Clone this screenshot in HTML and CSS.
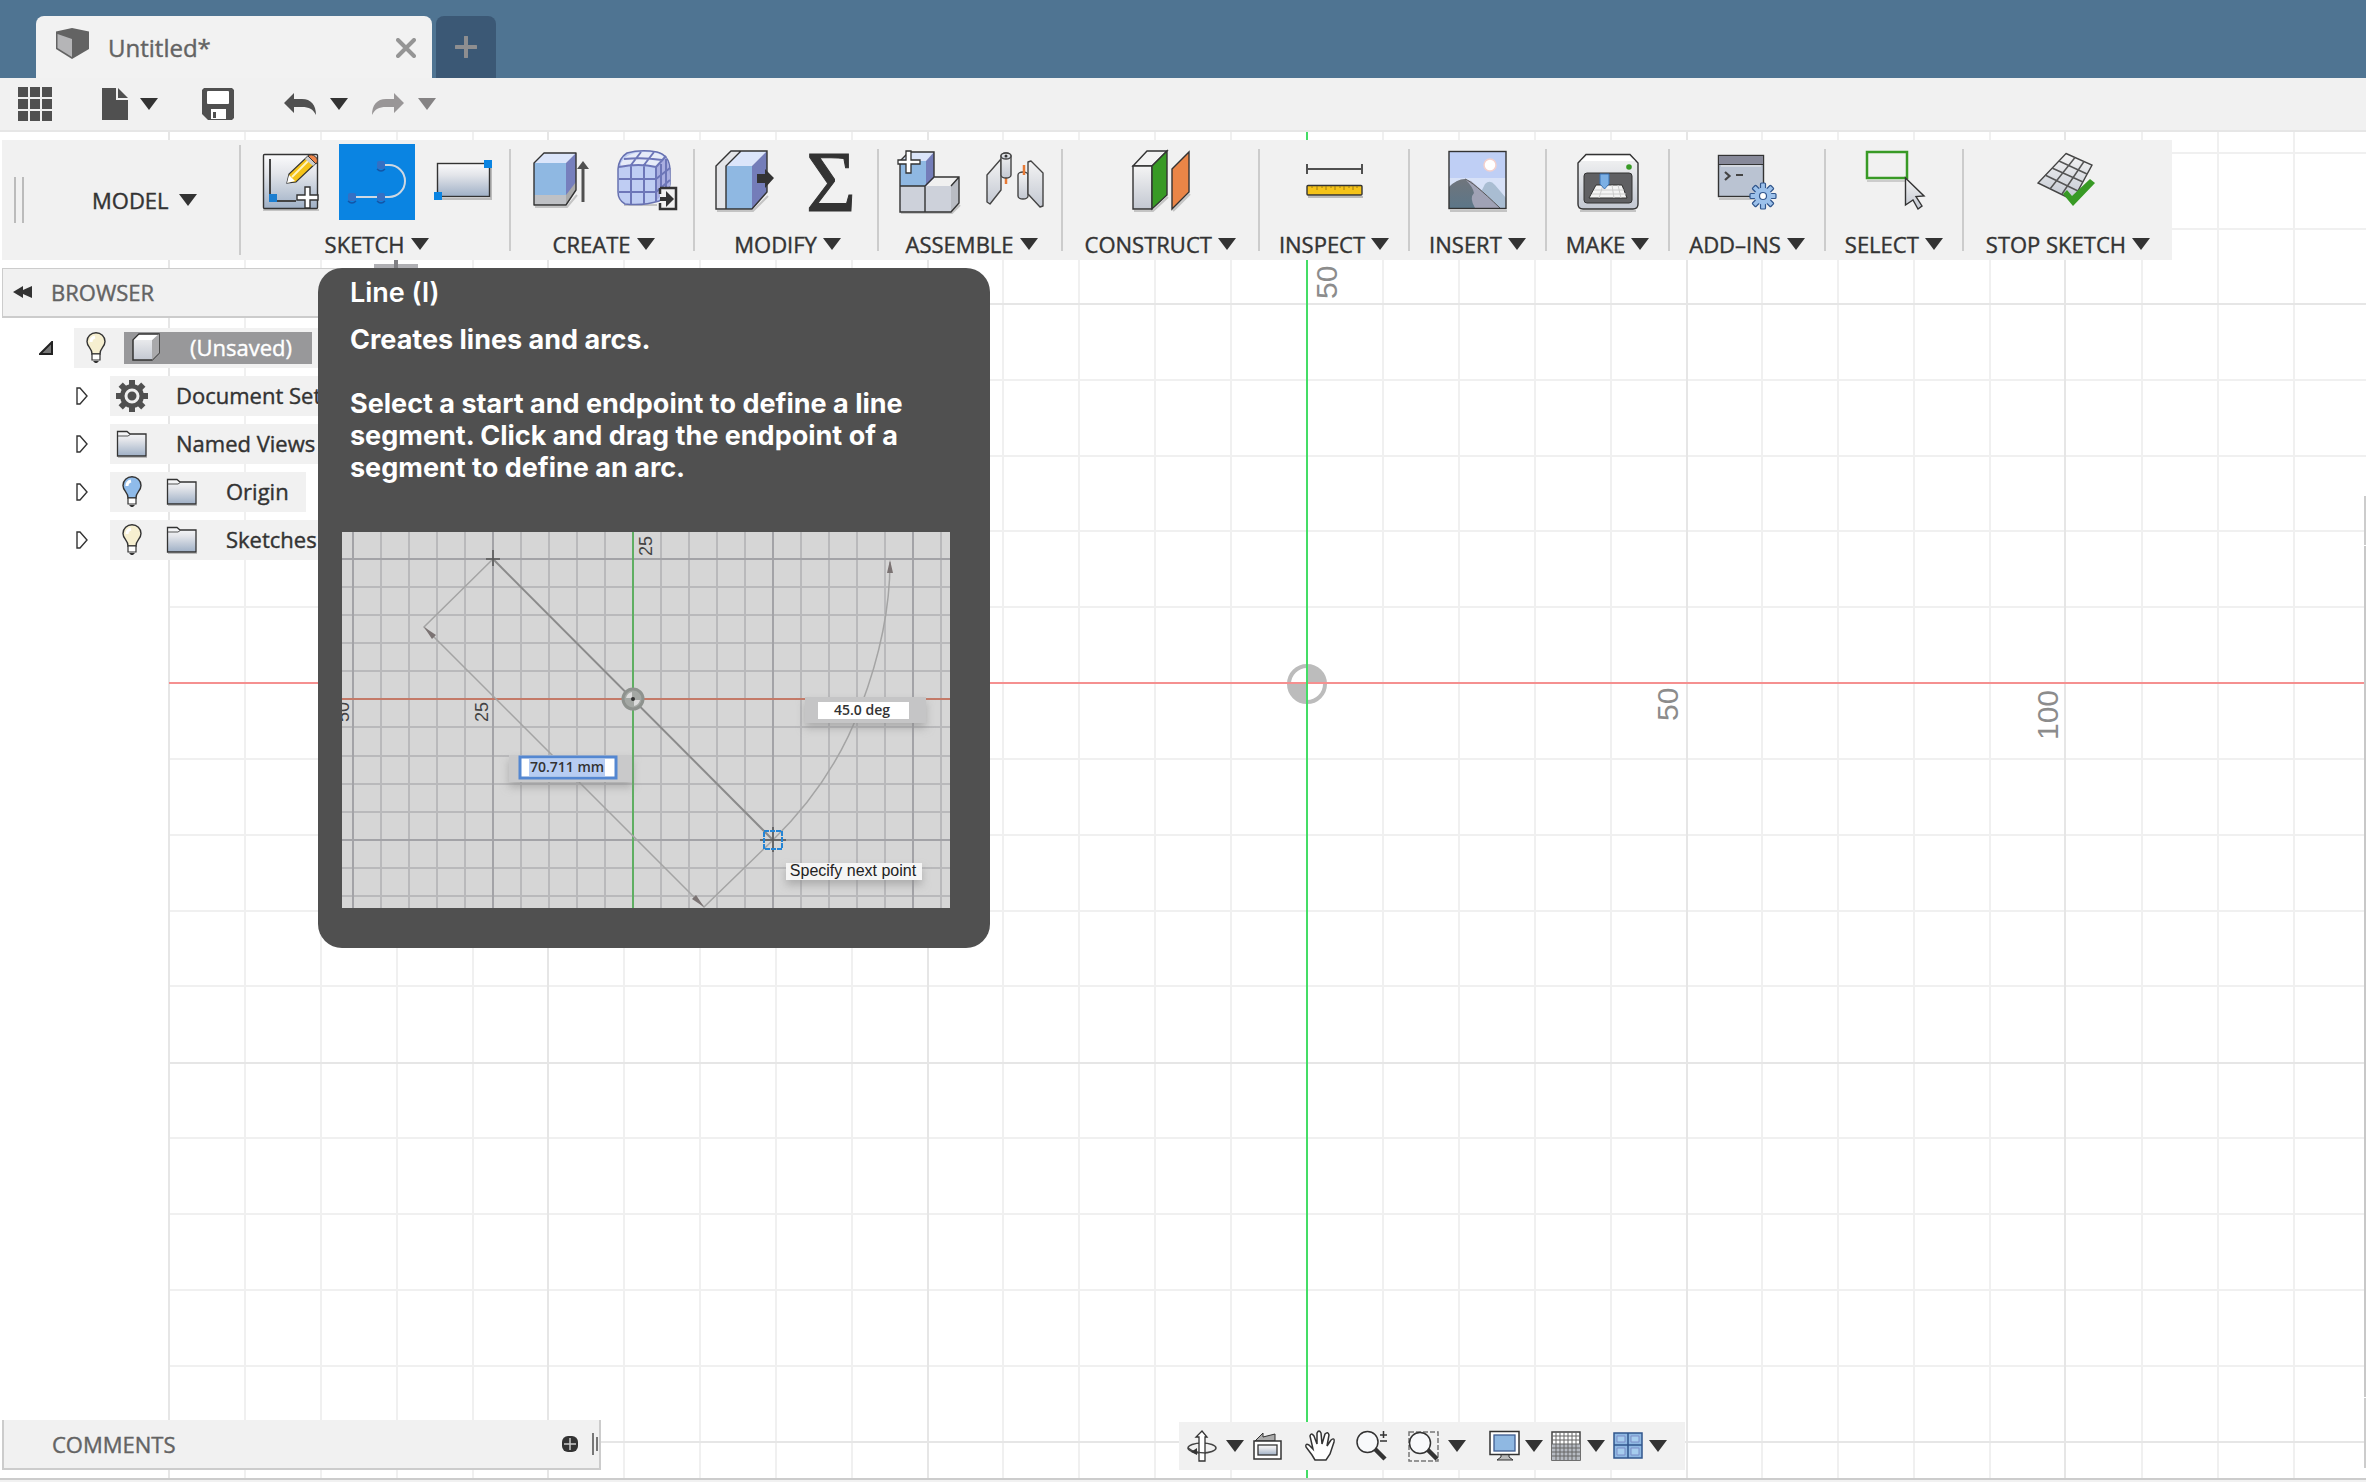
FILE: index.html
```html
<!DOCTYPE html>
<html lang="en">
<head>
<meta charset="utf-8">
<title>Untitled*</title>
<link rel="stylesheet" href="styles.css">
</head>
<body>
<svg class="defs" width="0" height="0" aria-hidden="true">
  <defs>
    <linearGradient id="steel" x1="0" y1="0" x2="0" y2="1"><stop offset="0" stop-color="#fbfbfc"/><stop offset=".35" stop-color="#e3e5ea"/><stop offset="1" stop-color="#9fb0c6"/></linearGradient>
    <linearGradient id="silver" x1="0" y1="0" x2="0" y2="1"><stop offset="0" stop-color="#f4f4f4"/><stop offset="1" stop-color="#c3c8d2"/></linearGradient>
    <linearGradient id="peak" x1="0" y1="0" x2="0" y2="1"><stop offset="0" stop-color="#70757c"/><stop offset="1" stop-color="#5c7688"/></linearGradient>
    <symbol id="caret" viewBox="0 0 18 12"><path d="M0 0H18L9 12Z" fill="currentColor"/></symbol>
    <symbol id="expand" viewBox="0 0 12 18"><path d="M1 1H4L11 9L4 17H1Z" fill="#fff" stroke="#333" stroke-width="1.4"/></symbol>
    <symbol id="folder" viewBox="0 0 32 28"><path d="M1.500 26V1.500H11L14 4H30V26Z" fill="url(#steel)" stroke="#333" stroke-width="1.300"/><path d="M2 6H12L15 4" fill="none" stroke="#555"/><path d="M2 27.500H31" stroke="#bbb"/></symbol>
    <symbol id="bulb" viewBox="0 0 20 32"><path d="M6 22C6 16 1 15 1 9.500A9 8.700 0 0 1 19 9.500C19 15 14 16 14 22Z" fill="currentColor" stroke="#333" stroke-width="1.400"/><path d="M6 22H14V28H6Z" fill="#fff" stroke="#333" stroke-width="1.200"/><path d="M7 29H13L11 31H9Z" fill="#333"/><path d="M5 10A5 5 0 0 1 9 5" stroke="#fff" stroke-width="3" fill="none"/></symbol>
    <symbol id="gear" viewBox="-16 -16 32 32"><g fill="currentColor"><rect x="-3" y="-16" width="6" height="32"/><rect x="-3" y="-16" width="6" height="32" transform="rotate(45)"/><rect x="-3" y="-16" width="6" height="32" transform="rotate(90)"/><rect x="-3" y="-16" width="6" height="32" transform="rotate(135)"/><circle r="12"/></g><circle r="6" fill="none" stroke="#f1f1f1" stroke-width="3"/></symbol>
  </defs>
</svg>

<header class="titlebar">
  <div class="tab">
    <svg width="34" height="32" viewBox="0 0 34 32"><path d="M0 3.500L16 0L33 3.500V21L16 31L0 21Z" fill="#636363"/><path d="M1.500 6L16 11V29L1.500 20Z" fill="#b5b5b7"/></svg>
    <span class="tab-name">Untitled*</span>
    <button class="tab-close" aria-label="Close tab"><svg width="20" height="20" viewBox="0 0 20 20"><path d="M2 2L18 18M18 2L2 18" stroke="#959595" stroke-width="4" stroke-linecap="round"/></svg></button>
  </div>
  <button class="tab-new" aria-label="New tab"><svg width="22" height="22" viewBox="0 0 22 22"><path d="M11 1V21M1 11H21" stroke="#8e8e90" stroke-width="4" stroke-linecap="round"/></svg></button>
</header>

<nav class="quickbar" aria-label="File">
  <button class="qb-grid" aria-label="Data panel"><svg width="34" height="34" viewBox="0 0 34 34"><path d="M0 0h10v10H0zM12 0h10v10H12zM24 0h10v10H24zM0 12h10v10H0zM12 12h10v10H12zM24 12h10v10H24zM0 24h10v10H0zM12 24h10v10H12zM24 24h10v10H24z" fill="#505050"/></svg></button>
  <button class="qb-item" aria-label="File"><svg width="26" height="32" viewBox="0 0 26 32"><path d="M0 0H14V12H26V32H0Z" fill="#505050"/><path d="M16 0L26 10H16Z" fill="#505050"/></svg><svg class="caret"><use href="#caret"/></svg></button>
  <button class="qb-item" aria-label="Save"><svg width="32" height="32" viewBox="0 0 32 32"><path d="M2 0H30L32 2V30L30 32H6L0 26V2Z" fill="#505050"/><rect x="5" y="3" width="22" height="13" rx="1" fill="#fff"/><rect x="9" y="21" width="15" height="10" fill="#fff"/><rect x="11" y="24" width="3" height="6" fill="#505050"/></svg></button>
  <button class="qb-item" aria-label="Undo"><svg width="32" height="22" viewBox="0 0 32 22"><path d="M0 10L10 0V6H18C27 6 32 12 32 22C29 16 25 14 18 14H10V20Z" fill="#505050"/></svg><svg class="caret"><use href="#caret"/></svg></button>
  <button class="qb-item muted" aria-label="Redo"><svg width="32" height="22" viewBox="0 0 32 22"><path d="M32 10L22 0V6H14C5 6 0 12 0 22C3 16 7 14 14 14H22V20Z" fill="#999697"/></svg><svg class="caret"><use href="#caret"/></svg></button>
</nav>

<main class="workspace">
  <svg class="canvas" aria-label="Sketch grid">
    <g transform="translate(0 -132)">
      <path class="minor" d="M245 0V4000M321 0V4000M397 0V4000M473 0V4000M624 0V4000M700 0V4000M776 0V4000M852 0V4000M1003 0V4000M1079 0V4000M1155 0V4000M1231 0V4000M1383 0V4000M1459 0V4000M1535 0V4000M1611 0V4000M1762 0V4000M1838 0V4000M1914 0V4000M1990 0V4000M2142 0V4000M2218 0V4000M2294 0V4000M169 153H5000M169 229H5000M169 380H5000M169 456H5000M169 531H5000M169 607H5000M169 759H5000M169 835H5000M169 911H5000M169 986H5000M169 1138H5000M169 1214H5000M169 1290H5000M169 1366H5000"/>
      <path class="major" d="M169 0V4000M548 0V4000M928 0V4000M1687 0V4000M2065 0V4000M169 304H5000M169 1063H5000M169 1442H5000"/>
      <circle cx="1307" cy="684" r="18" fill="#fff" stroke="#bcbcbc" stroke-width="4"/>
      <path d="M1307 684V665A19 19 0 0 1 1326 684ZM1307 684V703A19 19 0 0 1 1288 684Z" fill="#bcbcbc"/>
      <path d="M169 683H5000" stroke="#f59090" stroke-width="2"/>
      <path d="M1307 0V4000" stroke="#44dd66" stroke-width="2"/>
      <path d="M374 266H418" stroke="#b0b0b4" stroke-width="4"/><path d="M396 258V268" stroke="#808084" stroke-width="4"/>
      <g class="ruler">
        <text transform="translate(1337 299) rotate(-90)">50</text>
        <text transform="translate(1678 721) rotate(-90)">50</text>
        <text transform="translate(2058 740) rotate(-90)">100</text>
      </g>
    </g>
  </svg>

  <div class="ribbon">
    <div class="grip"></div>
    <button class="label model">MODEL <svg class="caret"><use href="#caret"/></svg></button>
    <span class="sep tall"></span>

    <section class="group">
      <div class="tools">
        <button class="tool" aria-label="Create sketch"><svg viewBox="0 0 76 76"><path d="M10 66H66" stroke="#c4c4c4" stroke-width="2"/><rect x="10.500" y="10.500" width="54" height="54" rx="1" fill="url(#steel)" stroke="#333" stroke-width="1.400"/><path d="M17 15V57H43" stroke="#444" stroke-width="2" fill="none"/><rect x="16" y="50" width="8" height="8" fill="#1b7ed0"/><path d="M34 39L36 30L55 12L63 19L43 38Z" fill="#f5c318" stroke="#333" stroke-width="1.200"/><path d="M34 39L36 31L42 37Z" fill="#fff"/><path d="M39 33L57 15" stroke="#fff5bd" stroke-width="2"/><path d="M52 15L55 12L63 19L60 22Z" fill="#ccc"/><path d="M55 12C59 8 68 15 63 20Z" fill="#ee8549" stroke="#333"/><path d="M52 43H57V51H65V56H57V64H52V56H44V51H52Z" fill="#fff" stroke="#333" stroke-width="1.400"/></svg></button>
        <button class="tool active" aria-label="Line"><svg viewBox="0 0 76 76"><path d="M13 53H50A16 16 0 0 0 50 21H42" fill="none" stroke="#cfd8e2" stroke-width="2"/><g fill="#3470c4"><rect x="9" y="49" width="8" height="8" rx="2"/><rect x="38" y="49" width="8" height="8" rx="2"/><rect x="38" y="17" width="8" height="8" rx="2"/></g><path d="M9 57q4 4 8 0M38 57q4 4 8 0M38 25q4 4 8 0" stroke="#1256a8" stroke-width="1.500" fill="none"/></svg></button>
        <button class="tool" aria-label="Rectangle"><svg viewBox="0 0 76 76"><path d="M14 55H66V24" stroke="#bbb" stroke-width="2" fill="none"/><rect x="12.500" y="19.500" width="52" height="33" fill="url(#steel)" stroke="#333" stroke-width="1.400"/><path d="M59 16h8v8h-8zM9 48h8v8H9z" fill="#0a84e2"/></svg></button>
      </div>
      <button class="label">SKETCH <svg class="caret"><use href="#caret"/></svg></button>
    </section>
    <span class="sep"></span>

    <section class="group">
      <div class="tools">
        <button class="tool" aria-label="Extrude"><svg viewBox="0 0 76 76"><path d="M12 63H44L54 51" stroke="#c4c4c4" stroke-width="2" fill="none"/><g stroke-linejoin="round"><path d="M11 19L21 9H53L43 19Z" fill="#dbe5fa"/><path d="M43 19L53 9V46L43 61Z" fill="#767fbd"/><path d="M43 51L53 38V46L43 61Z" fill="#aaa"/><path d="M11 19H43V51H11Z" fill="#8fb8e2"/><path d="M11 51H43V61H11Z" fill="#bfc1c5"/><path d="M11 19L21 9H53V46L43 61H11Z" fill="none" stroke="#333" stroke-width="1.400"/></g><path d="M60 58V22" stroke="#505050" stroke-width="3"/><path d="M54 25L60 17L66 25Z" fill="#505050"/></svg></button>
        <button class="tool" aria-label="Create form"><svg viewBox="0 0 76 76"><path d="M15 61H48" stroke="#c4c4c4" stroke-width="2"/><path d="M9 48V25Q10 14 18 9Q32 5 48 8Q60 11 61 25V40Q60 52 50 57Q34 62 16 60Q9 56 9 48Z" fill="#bfcdf3" stroke="#6771b0" stroke-width="1.500"/><path d="M12 19Q18 8 36 8Q53 8 56 15L47 23Q30 20 12 23Z" fill="#e6ebf8"/><path d="M47 23L57 13Q62 24 61 42L47 57Z" fill="#a9aee0"/><path d="M10 23Q30 19 47 23V58M47 23L57 12M10 35H47L61 24M10 48H47L61 36M22 21V60M35 21V60M22 21L32 8M35 21L45 8M15 15Q34 13 53 16M52 20V54M57 15V50" fill="none" stroke="#6d76b8" stroke-width="2"/><path d="M51 44H67V65H51V59M51 50V44" fill="#f1f1f1" stroke="#333" stroke-width="2.500"/><path d="M51 53H57V47L65 55L57 63V57H51Z" fill="#333"/></svg></button>
      </div>
      <button class="label">CREATE <svg class="caret"><use href="#caret"/></svg></button>
    </section>
    <span class="sep"></span>

    <section class="group">
      <div class="tools">
        <button class="tool" aria-label="Press pull"><svg viewBox="0 0 76 76"><path d="M10 67H46L61 52" stroke="#c4c4c4" stroke-width="2" fill="none"/><path d="M9 22L24 7H34L19 22V65H9Z" fill="#e4e5e8"/><path d="M19 22L34 7H60L45 22Z" fill="#dbe5fa"/><path d="M45 22L60 7V48L45 65Z" fill="#747db9"/><path d="M19 22H45V65H19Z" fill="#8fb8e2"/><path d="M9 22L24 7H60V48L45 65H9ZM19 65V22L34 7" fill="none" stroke="#333" stroke-width="1.400"/><path d="M50 30H58V25L67 34L58 44V39H50Z" fill="#333"/></svg></button>
        <button class="tool" aria-label="Parameters"><svg viewBox="0 0 76 76"><text x="38" y="67" text-anchor="middle" class="sigma">Σ</text></svg></button>
      </div>
      <button class="label">MODIFY <svg class="caret"><use href="#caret"/></svg></button>
    </section>
    <span class="sep"></span>

    <section class="group">
      <div class="tools">
        <button class="tool" aria-label="New component"><svg viewBox="0 0 76 76"><path d="M10 69H61L69 61" stroke="#c4c4c4" stroke-width="2" fill="none"/><path d="M34 42L43 33H68L60 42Z" fill="#f0f0f0"/><path d="M60 42L68 33V59L60 68Z" fill="#b9bcc3"/><path d="M9 42H60V68H9Z" fill="#cdd1da"/><path d="M9 17L18 8H43L35 17Z" fill="#dbe5fa"/><path d="M35 17L43 8V34L35 42Z" fill="#747db9"/><path d="M9 17H35V42H9Z" fill="#8fb8e2"/><path d="M9 42V17L18 8H43V33H68V59L60 68H9V42H34V68M34 42L43 33M60 42L68 33" fill="none" stroke="#333" stroke-width="1.400"/><path d="M15 7H20V16H29V20H20V29H15V20H7V16H15Z" fill="#fff" stroke="#333" stroke-width="1.300"/></svg></button>
        <button class="tool" aria-label="Joint"><svg viewBox="0 0 76 76"><path d="M29 28V40" stroke="#e87a35" stroke-width="2.500"/><g fill="url(#silver)" stroke="#444" stroke-width="1.400" stroke-linejoin="round"><path d="M10 31L24 15V46L13 60L10 58Z"/><path d="M24 12A5 3 0 0 1 34 12V31A5 3 0 0 1 24 31Z"/><ellipse cx="29" cy="12" rx="5" ry="3"/><path d="M41 31A5 3 0 0 1 51 31V52A5 3 0 0 1 41 52Z"/><path d="M51 18L54 17L66 29V62L63 63L51 50Z"/></g><circle cx="29" cy="12" r="1.500" fill="#333"/><path d="M47 21V31" stroke="#e87a35" stroke-width="2.500"/></svg></button>
      </div>
      <button class="label">ASSEMBLE <svg class="caret"><use href="#caret"/></svg></button>
    </section>
    <span class="sep"></span>

    <section class="group single roomy">
      <div class="tools">
        <button class="tool" aria-label="Offset plane"><svg viewBox="0 0 76 76"><path d="M12 67H31L46 53M51 67L68 50" stroke="#c4c4c4" stroke-width="2" fill="none"/><g stroke="#333" stroke-width="1.400"><path d="M11 22L25 7H45L30 22Z" fill="#f3f3f3"/><path d="M11 22H30V65H11Z" fill="url(#silver)"/><path d="M30 22L45 7V51L30 65Z" fill="#389a25"/><path d="M50 25L67 8V48L50 65Z" fill="#ea8547"/></g></svg></button>
      </div>
      <button class="label">CONSTRUCT <svg class="caret"><use href="#caret"/></svg></button>
    </section>
    <span class="sep"></span>

    <section class="group single">
      <div class="tools">
        <button class="tool" aria-label="Measure"><svg viewBox="0 0 76 76"><path d="M11 25H66M11 20V30M66 20V30" stroke="#505050" stroke-width="2"/><path d="M12 53H67" stroke="#bbb" stroke-width="2"/><rect x="11" y="41.500" width="55" height="9.500" rx="1" fill="#f5c318" stroke="#333" stroke-width="1.400"/><path d="M16 42v2M21 42v4M26 42v2M30 42v4M35 42v2M39 42v4M44 42v2M48 42v4M53 42v2M57 42v4M61 42v2" stroke="#a07c14"/></svg></button>
      </div>
      <button class="label">INSPECT <svg class="caret"><use href="#caret"/></svg></button>
    </section>
    <span class="sep"></span>

    <section class="group single">
      <div class="tools">
        <button class="tool" aria-label="Insert image"><svg viewBox="0 0 76 76"><path d="M11 67H68" stroke="#c4c4c4" stroke-width="2"/><rect x="10" y="7.500" width="57" height="57" fill="#bfcff5"/><path d="M10 34H67V64H10Z" fill="#d7e1f7"/><circle cx="51" cy="21" r="6" fill="#fff" stroke="#f3d0cc" stroke-width="1.500"/><path d="M40 52L46 40Q51 35 56 41L67 54V64H40Z" fill="#a9bdd2"/><path d="M10 43Q22 32 32 37C41 44 53 57 61 64H10Z" fill="#a0a2b5"/><path d="M10 43Q18 35 26 35Q34 43 35 49Q30 54 36 64H10Z" fill="url(#peak)"/><path d="M26 35Q34 38 61 64" fill="none" stroke="#555"/><rect x="10" y="7.500" width="57" height="57" fill="none" stroke="#333" stroke-width="1.400"/></svg></button>
      </div>
      <button class="label">INSERT <svg class="caret"><use href="#caret"/></svg></button>
    </section>
    <span class="sep"></span>

    <section class="group single">
      <div class="tools">
        <button class="tool" aria-label="3D print"><svg viewBox="0 0 76 76"><path d="M10 67H66" stroke="#c4c4c4" stroke-width="2"/><path d="M8 19L16 10.500H60L68 19V60Q68 65 63 65H13Q8 65 8 60Z" fill="url(#silver)" stroke="#333" stroke-width="1.400"/><path d="M11 17L17 12H59L65 17Z" fill="#fff"/><rect x="14" y="29" width="48" height="30" rx="3" fill="#606063" stroke="#333"/><path d="M26 41H52L57 54H19Z" fill="#f4f4f4" stroke="#333"/><path d="M24 46H54M22 50H56M33 41L29 54M42 41L44 54M48 41L51 54" stroke="#ccc"/><path d="M30 30H39V40L34.500 45L30 40Z" fill="#7bafe4" stroke="#3b72b3"/><circle cx="59" cy="23" r="2.800" fill="#389a25"/></svg></button>
      </div>
      <button class="label">MAKE <svg class="caret"><use href="#caret"/></svg></button>
    </section>
    <span class="sep"></span>

    <section class="group single">
      <div class="tools">
        <button class="tool" aria-label="Scripts and add-ins"><svg viewBox="0 0 76 76"><path d="M10 55H50" stroke="#c4c4c4" stroke-width="2"/><rect x="9.500" y="11.500" width="45" height="41" fill="#bac3d2" stroke="#333" stroke-width="1.400"/><path d="M10 12H54V20H10Z" fill="#878999"/><path d="M10 20.500H54" stroke="#333"/><path d="M12 22H52" stroke="#eee"/><path d="M16 28L20.500 32L16 36" fill="none" stroke="#444" stroke-width="2.200"/><path d="M27 31H34" stroke="#444" stroke-width="2"/><g transform="translate(54 52)" stroke="#31568c" stroke-width="1.200"><g fill="#9cc1eb"><rect x="-2.500" y="-13" width="5" height="26" rx="1"/><rect x="-2.500" y="-13" width="5" height="26" rx="1" transform="rotate(45)"/><rect x="-2.500" y="-13" width="5" height="26" rx="1" transform="rotate(90)"/><rect x="-2.500" y="-13" width="5" height="26" rx="1" transform="rotate(135)"/></g><circle r="8" fill="#9cc1eb" stroke="#9cc1eb"/><circle r="3.500" fill="#fff"/></g></svg></button>
      </div>
      <button class="label">ADD–INS <svg class="caret"><use href="#caret"/></svg></button>
    </section>
    <span class="sep"></span>

    <section class="group single">
      <div class="tools">
        <button class="tool" aria-label="Select"><svg viewBox="0 0 76 76"><path d="M11 37H51" stroke="#ccc" stroke-width="2"/><rect x="11" y="8" width="40" height="26" fill="none" stroke="#389a25" stroke-width="2.500"/><path d="M49.500 34L68 52L60 52.500L66 62L62 65L57 56L49.500 61Z" fill="url(#silver)" stroke="#333" stroke-width="1.400"/></svg></button>
      </div>
      <button class="label">SELECT <svg class="caret"><use href="#caret"/></svg></button>
    </section>
    <span class="sep"></span>

    <section class="group single roomy">
      <div class="tools">
        <button class="tool" aria-label="Stop sketch"><svg viewBox="0 0 76 76"><path d="M36 9.500L62 21L43 56L8 39Z" fill="url(#silver)" stroke="#444" stroke-width="1.400"/><path d="M45 13.500L20 45M54 17.500L32 50M29 17L57 30M22 24L53 38M15 31L48 47" stroke="#555" stroke-width="1.500"/><path d="M33 50L37 46L42 52L60 35L65 39L43 62Z" fill="#389a25"/></svg></button>
      </div>
      <button class="label">STOP SKETCH <svg class="caret"><use href="#caret"/></svg></button>
    </section>
  </div>

  <aside class="browser">
    <h2 class="browser-head"><svg width="20" height="12" viewBox="0 0 20 12"><path d="M0 6L10 0V4L19 0V12L10 8V12Z" fill="#333"/></svg>BROWSER</h2>
    <ul class="tree">
      <li class="node root"><svg class="twist open" viewBox="0 0 14 14"><path d="M1 13L13 1V13Z" fill="#777" stroke="#222" stroke-width="2"/></svg>
        <div class="row"><svg class="bulb lit"><use href="#bulb"/></svg><span class="picked"><svg width="28" height="28" viewBox="0 0 28 28"><path d="M1 7L7 1H27V20L20 27H1Z" fill="url(#silver)" stroke="#333" stroke-width="1.500"/><path d="M20 7L27 1V20L20 27Z" fill="#a9a9ab"/><path d="M2 7L7 2H25L20 7Z" fill="#fff"/></svg>(Unsaved)</span></div></li>
      <li class="node"><svg class="twist"><use href="#expand"/></svg><div class="row wide"><svg class="cog"><use href="#gear"/></svg><span class="far">Document Settings</span></div></li>
      <li class="node"><svg class="twist"><use href="#expand"/></svg><div class="row wide"><svg class="folder"><use href="#folder"/></svg><span class="far">Named Views</span></div></li>
      <li class="node"><svg class="twist"><use href="#expand"/></svg><div class="row"><svg class="bulb off"><use href="#bulb"/></svg><svg class="folder"><use href="#folder"/></svg><span class="far">Origin</span></div></li>
      <li class="node"><svg class="twist"><use href="#expand"/></svg><div class="row"><svg class="bulb lit"><use href="#bulb"/></svg><svg class="folder"><use href="#folder"/></svg><span class="far">Sketches</span></div></li>
    </ul>
  </aside>

  <div class="tooltip" role="tooltip">
    <h3>Line (l)</h3>
    <p>Creates lines and arcs.</p>
    <p>Select a start and endpoint to define a line segment. Click and drag the endpoint of a segment to define an arc.</p>
    <svg class="preview" viewBox="0 0 608 376">
      <rect width="608" height="376" fill="#d6d6d6"/>
      <path d="M39 0V376M67 0V376M95 0V376M123 0V376M179 0V376M207 0V376M235 0V376M263 0V376M319 0V376M347 0V376M375 0V376M403 0V376M459 0V376M487 0V376M515 0V376M543 0V376M599 0V376M0 55H608M0 83H608M0 111H608M0 139H608M0 195H608M0 224H608M0 252H608M0 280H608M0 336H608M0 364H608" stroke="#b9b9bb" stroke-width="2"/>
      <path d="M11 0V376M151 0V376M431 0V376M571 0V376M0 27H608M0 308H608" stroke="#a3a3a7" stroke-width="2"/>
      <path d="M0 167H608" stroke="#c47a68" stroke-width="2"/><path d="M291 0V376" stroke="#5fae62" stroke-width="2"/>
      <path d="M151 27L431 308" stroke="#8b8b8b" stroke-width="2"/>
      <path d="M151 27L82 95L362 375L431 308C478 262 504 215 519 174C536 129 548 80 548 30" fill="none" stroke="#a4a4a4" stroke-width="1.500"/>
      <path d="M82 95L94 103L90 107ZM362 375L350 367L354 363ZM548 28L551 41H545Z" fill="#7b7373"/>
      <circle cx="291" cy="167" r="10" fill="#a4a8a4" stroke="#8e928e" stroke-width="3"/><path d="M284 166A8 8 0 0 1 290 160V166ZM298 168A8 8 0 0 1 292 174V168Z" fill="#dcdcdc"/><circle cx="291" cy="167" r="2" fill="#333"/>
      <path d="M151 18V34M144 27H158M431 295V320M418 308H444" stroke="#555" stroke-width="1.500"/>
      <rect x="422" y="299" width="18" height="18" fill="none" stroke="#2384d5" stroke-width="2" stroke-dasharray="5 1"/>
      <g class="preview-ruler"><text transform="translate(310 24) rotate(-90)">25</text><text transform="translate(146 190) rotate(-90)">25</text><text transform="translate(7 190) rotate(-90)">50</text></g>
      <g class="floating"><rect x="463" y="165" width="121" height="26" fill="#c5c5c6"/><rect x="167" y="223" width="123" height="27" fill="#c9c9ca"/><rect x="444" y="331" width="136" height="17" fill="#f5f5f5"/></g>
      <rect x="476" y="170" width="91" height="17" fill="#fff"/>
      <rect x="178" y="225" width="96" height="21" fill="#fff" stroke="#5487d1" stroke-width="3"/><rect x="187" y="227" width="76" height="17" fill="#b7cdf3"/>
      <text x="520" y="183" text-anchor="middle" class="value">45.0 deg</text>
      <text x="225" y="240" text-anchor="middle" class="value">70.711 mm</text>
      <text x="511" y="344" text-anchor="middle" class="hint">Specify next point</text>
    </svg>
  </div>

  <div class="side-dock"><span class="dock-top"></span><span class="dock-bar"></span><span class="dock-end"></span></div>

  <div class="bottom">
    <section class="comments"><h2>COMMENTS</h2>
      <button aria-label="Add comment"><svg width="16" height="16" viewBox="0 0 16 16"><rect width="16" height="16" rx="6" fill="#333"/><path d="M8 2V14M2 8H14" stroke="#ccc" stroke-width="1.500"/></svg></button>
      <svg width="6" height="22" viewBox="0 0 6 22"><path d="M1 0V22M5 4V18" stroke="#777" stroke-width="2"/></svg>
    </section>
    <nav class="navbar" aria-label="View">
      <div class="nav-set">
        <button aria-label="Orbit"><svg viewBox="0 0 32 32"><ellipse cx="16" cy="18" rx="14" ry="5" fill="none" stroke="#444" stroke-width="1.500"/><path d="M13 31V7H10L16 1L21 7H19V31Z" fill="#fff" stroke="#333" stroke-width="1.300"/><path d="M2 18Q8 23 20 23" fill="none" stroke="#444" stroke-width="1.500"/><path d="M5 22L11 18V25Z" fill="#333"/></svg></button><button class="drop" aria-label="Orbit menu"><svg class="caret"><use href="#caret"/></svg></button>
        <button aria-label="Look at"><svg viewBox="0 0 32 32"><path d="M3 11L11 3V7L23 4V11Z" fill="#aaa" stroke="#333"/><rect x="2" y="11" width="27" height="18" fill="#fff" stroke="#333" stroke-width="1.500"/><rect x="6" y="15" width="19" height="10" fill="url(#steel)" stroke="#333" stroke-width="1.300"/></svg></button>
        <button class="spaced" aria-label="Pan"><svg viewBox="0 0 32 32"><path d="M11 30L8 25L2 17Q1 13 5 15L9 19L6 6Q7 2 10 6L13 14L13 3Q15 -1 17 3L18 14L21 4Q24 1 25 5L23 16L27 10Q31 7 30 12L26 24L22 30Z" fill="#fff" stroke="#333" stroke-width="1.500"/></svg></button>
        <button class="spaced" aria-label="Zoom"><svg viewBox="0 0 32 32"><path d="M19 19L29 29" stroke="#333" stroke-width="4.500"/><circle cx="11.500" cy="12" r="10.500" fill="#f8f9fb" stroke="#333" stroke-width="1.500"/><path d="M24 5H31M27.500 1V8M24 11H31" stroke="#333" stroke-width="1.500"/></svg></button>
        <button class="spaced" aria-label="Zoom window"><svg viewBox="0 0 32 32"><rect x="1" y="2" width="29" height="29" fill="none" stroke="#777" stroke-dasharray="5 2" stroke-width="1.500"/><path d="M19 19L29 29" stroke="#333" stroke-width="4.500"/><circle cx="12" cy="13" r="10.500" fill="#f8f9fb" stroke="#333" stroke-width="1.500"/></svg></button><button class="drop" aria-label="Zoom menu"><svg class="caret"><use href="#caret"/></svg></button>
      </div>
      <div class="nav-set tight">
        <button aria-label="Display"><svg viewBox="0 0 32 32"><path d="M12 24H20V27L24 30H8L12 27Z" fill="#bbb" stroke="#333"/><rect x="1" y="1.500" width="29" height="23" fill="#fff" stroke="#333" stroke-width="1.500"/><rect x="5" y="5" width="21" height="16" fill="#8fb8e2" stroke="#3e5c90" stroke-width="1.300"/></svg></button><button class="drop" aria-label="Display menu"><svg class="caret"><use href="#caret"/></svg></button>
        <button aria-label="Grid"><svg viewBox="0 0 32 32"><rect x="1" y="2" width="28" height="28" fill="#fff" stroke="#444" stroke-width="1.500"/><path d="M1 14H29V30H1Z" fill="#b6bac1"/><path d="M5 2V30M9 2V30M13 2V30M17 2V30M21 2V30M25 2V30M1 6H29M1 10H29M1 14H29M1 18H29M1 22H29M1 26H29" stroke="#666"/></svg></button><button class="drop" aria-label="Grid menu"><svg class="caret"><use href="#caret"/></svg></button>
        <button aria-label="Viewports"><svg viewBox="0 0 32 32"><rect x="1" y="3" width="28" height="25" fill="#8fb8e2" stroke="#31568c" stroke-width="1.500"/><path d="M15 3V28M1 15H29" stroke="#31568c" stroke-width="1.500"/><path d="M4 6H12V12H4ZM18 6H26V12H18ZM4 18H12V25H4ZM18 18H26V25H18Z" fill="#a6cdee" stroke="#7c8fc8"/></svg></button><button class="drop" aria-label="Viewports menu"><svg class="caret"><use href="#caret"/></svg></button>
      </div>
    </nav>
  </div>
</main>
<footer class="status"></footer>
</body>
</html>
```

FILE: styles.css
```css
* { box-sizing: border-box; }

body {
  margin: 0;
  min-height: 100vh;
  display: flex;
  flex-direction: column;
  background: #fff;
  color: #333;
  font: 22px/30px "Open Sans", "Noto Sans", sans-serif;
}

button {
  display: flex;
  align-items: center;
  padding: 0;
  border: 0;
  background: none;
  color: inherit;
  font: inherit;
}

svg { display: block; flex: none; }
h2, h3, p, ul { margin: 0; padding: 0; font-size: inherit; font-weight: inherit; }
.defs { position: absolute; }
.caret { width: 18px; height: 12px; color: #333; }

/* Document tabs */
.titlebar {
  display: flex;
  gap: 4px;
  height: 78px;
  padding: 16px 36px 0;
  background: #4f7492;
}
.tab {
  display: flex;
  align-items: center;
  width: 396px;
  padding: 0 16px 6px 20px;
  border-radius: 8px 8px 0 0;
  background: #f2f2f2;
  color: #636363;
  font-size: 24px;
}
.tab-name { margin-left: 18px; padding-top: 8px; -webkit-text-stroke: 0.4px currentColor; }
.tab-close { margin: 8px 0 0 auto; }
.tab-new {
  justify-content: center;
  width: 60px;
  border-radius: 8px 8px 0 0;
  background: #3b5875;
}

/* File actions */
.quickbar {
  display: flex;
  align-items: center;
  height: 54px;
  padding: 0 18px;
  border-bottom: 2px solid #e6e6e6;
  background: #f1f1f1;
}
.qb-grid { margin-right: 50px; }
.qb-item { gap: 12px; margin-right: 44px; }
.qb-item:nth-of-type(3) { margin-right: 50px; }
.qb-item:nth-of-type(4) { gap: 14px; margin-right: 24px; }
.qb-item.muted { gap: 14px; }
.muted .caret { color: #858384; }

/* Modelling area */
.workspace {
  position: relative;
  flex: 1;
  display: flex;
  flex-direction: column;
  align-items: flex-start;
  padding: 8px 0 8px 2px;
}
.canvas {
  position: absolute;
  inset: 0;
  width: 100%;
  height: 100%;
  shape-rendering: crispEdges;
}
.canvas circle { shape-rendering: auto; }
.minor { stroke: #f0f0f0; stroke-width: 2; }
.major { stroke: #e6e6e6; stroke-width: 2; }
.ruler { fill: #8c8c8c; font: 30px "Liberation Sans", Arial, sans-serif; }

/* Ribbon */
.ribbon {
  position: relative;
  display: flex;
  height: 120px;
  background: #f1f1f1;
}
.grip {
  align-self: center;
  width: 10px;
  height: 46px;
  margin-left: 12px;
  border: solid #bbb;
  border-width: 0 2px;
}
.sep {
  align-self: center;
  width: 2px;
  height: 102px;
  background: #ccc;
}
.sep.tall { height: 110px; }
.label { gap: 6px; white-space: nowrap; -webkit-text-stroke: 0.4px currentColor; }
.model { gap: 10px; margin: 0 42px 0 68px; }
.group {
  display: flex;
  flex-direction: column;
  align-items: center;
  gap: 9px;
  padding: 4px 8px 0 12px;
}
.group.single { padding: 4px 19px 0; }
.group.roomy { padding: 4px 22px 0; }
.tools { display: flex; gap: 10px; }
.tool svg { width: 76px; height: 76px; overflow: visible; }
.tool.active { background: #0a84e2; }
.sigma { fill: #333; stroke: #333; stroke-width: 1px; font: 86px "Liberation Serif", "Times New Roman", serif; }

/* Browser tree */
.browser { position: relative; width: 480px; margin-top: 8px; }
.browser-head {
  display: flex;
  align-items: center;
  gap: 18px;
  height: 50px;
  padding: 0 10px 2px;
  border: 2px solid #ccc;
  border-width: 1px 1px 2px;
  background: #f1f1f1;
  color: #636363;
  -webkit-text-stroke: 0.4px currentColor;
}
.tree { display: flex; flex-direction: column; gap: 8px; padding: 10px 0 0 74px; list-style: none; -webkit-text-stroke: 0.4px currentColor; }
.node { display: flex; align-items: center; gap: 22px; height: 40px; }
.node.root { gap: 21px; margin-left: -37px; }
.twist { width: 12px; height: 18px; }
.twist.open { width: 14px; height: 14px; }
.row {
  display: flex;
  align-items: center;
  gap: 24px;
  height: 40px;
  padding: 0 17px 0 12px;
  background: #f1f1f1;
}
.row.wide { padding-left: 6px; }
.root .row { gap: 18px; padding-right: 8px; }
.bulb { width: 20px; height: 32px; }
.bulb.lit { color: #f6efd0; }
.bulb.off { color: #8fbbea; }
.folder { width: 32px; height: 28px; }
.cog { width: 32px; height: 32px; color: #505050; }
.far { margin-left: 4px; padding-bottom: 2px; }
.picked {
  display: flex;
  align-items: center;
  gap: 30px;
  height: 32px;
  padding: 0 20px 2px 8px;
  background: #98989a;
  color: #fff;
}

/* Command tooltip, lies over the canvas */
.tooltip {
  position: absolute;
  top: 136px;
  left: 318px;
  width: 672px;
  padding: 9px 24px 40px;
  border-radius: 24px;
  background: #505050;
  color: #fff;
  font: 700 27px/32px Inter, "Liberation Sans", sans-serif;
}
.tooltip h3 { margin: 0 8px 15px; font-weight: 600; }
.tooltip p { margin: 0 8px 32px; }
.preview { width: 608px; height: 376px; margin-top: 48px; }
.preview-ruler { fill: #444; font: 18px "Liberation Sans", Arial, sans-serif; }
.value { fill: #333; font: 600 14px "Open Sans", sans-serif; }
.hint { fill: #222; font: 16px "Liberation Sans", Arial, sans-serif; }
.floating { filter: drop-shadow(0 5px 4px #8888); }

/* Collapsed panel at the right edge */
.side-dock {
  position: absolute;
  top: 364px;
  right: 0;
  bottom: 10px;
  display: flex;
  flex-direction: column;
  gap: 1px;
  width: 2px;
}
.dock-top { height: 49px; background: #ccc; }
.dock-bar { flex: 1; background: #c8c8c8; }
.dock-end { height: 70px; background: #ccc; }

/* Bottom panels */
.bottom {
  position: relative;
  display: grid;
  grid-template-columns: 599px 17fr auto 20fr;
  align-items: end;
  width: 100%;
  margin-top: auto;
}
.comments {
  display: flex;
  align-items: center;
  height: 50px;
  padding: 0 1px 0 48px;
  border: solid #ccc;
  border-width: 0 2px 2px;
  background: #f1f1f1;
  color: #636363;
  -webkit-text-stroke: 0.4px currentColor;
}
.comments button { margin: 0 14px 0 auto; }
.navbar {
  grid-column: 3;
  display: flex;
  gap: 15px;
  height: 48px;
  padding: 0 10px 0 7px;
  background: #f1f1f1;
}
.nav-set { display: flex; align-items: center; }
.nav-set button > svg:not(.caret) { width: 32px; height: 32px; }
.nav-set .drop { margin: 0 8px; }
.nav-set .spaced { margin-left: 20px; }
.tight .drop { margin-left: 4px; }

.status { height: 4px; border-top: 2px solid #ccc; background: #f1f1f1; }
```
